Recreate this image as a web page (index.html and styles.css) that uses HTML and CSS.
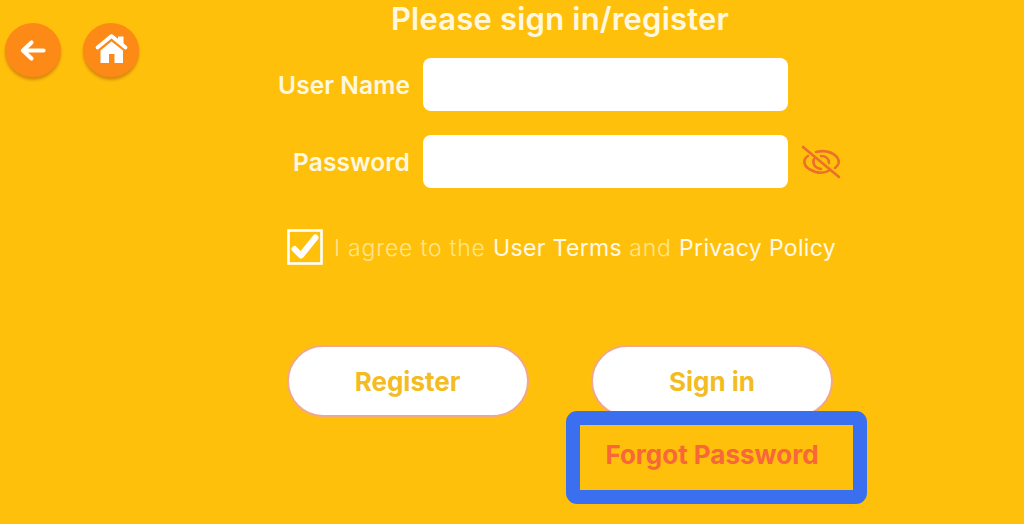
FILE: index.html
```html
<!DOCTYPE html>
<html lang="en">
<head>
<meta charset="utf-8">
<title>Sign in</title>
<link rel="stylesheet" href="styles.css">
</head>
<body>
<div class="page">
  <nav class="nav">
    <button class="round" aria-label="Back">
      <svg width="30" height="30" viewBox="0 0 30 30"><path d="M25.500 15.500H6M13.500 7.500 5 15.500l8.500 8" fill="none" stroke="#fff" stroke-width="4.200" stroke-linecap="round" stroke-linejoin="round"/></svg>
    </button>
    <button class="round" aria-label="Home">
      <svg width="34" height="34" viewBox="0 0 34 34"><path d="M17.500 8.500 6.500 17.500V30H15v-9h5.500v9H29V17.500z" fill="#fff"/><path d="M3.500 14.500 17.500 3l14 11.500" fill="none" stroke="#fff" stroke-width="3.600" stroke-linecap="round" stroke-linejoin="round"/><path d="M24 3.500h5.500V12L24 7.500z" fill="#fff"/></svg>
    </button>
  </nav>
  <main class="form">
    <h1 class="title">Please sign in/register</h1>
    <div class="field">
      <label class="label">User Name</label>
      <div class="input"></div>
    </div>
    <div class="field field-second">
      <label class="label">Password</label>
      <div class="input"></div>
      <svg class="eye" width="42" height="36" viewBox="0 0 42 36"><g fill="none" stroke="#EC6F2A" stroke-width="2.600" stroke-linecap="round"><path d="M3 3 39 33"/><path d="M8 12C3 15 3 21 9 25c7 4 15 5 21 1"/><path d="M16 8c8-2 16 0 21 5 3 4 2 8-2 11"/><path d="M14 15c-2 5 1 9 7 10"/><path d="M21 12c5 0 8 3 8 7"/></g></svg>
    </div>
    <div class="agree">
      <svg class="check" width="36" height="36" viewBox="0 0 36 36"><rect x="1.500" y="1.500" width="33" height="33" fill="none" stroke="#fff" stroke-width="2.600"/><path d="M7.500 20 14 26.500 28.500 8.500" fill="none" stroke="#fff" stroke-width="6" stroke-linecap="round" stroke-linejoin="round"/></svg>
      <p class="agree-text">I agree to the <span class="link">User Terms</span> and <span class="link">Privacy Policy</span></p>
    </div>
    <div class="actions">
      <button class="pill">Register</button>
      <button class="pill">Sign in</button>
    </div>
    <div class="forgot-row">
      <a class="forgot">Forgot Password</a>
    </div>
  </main>
  <div class="highlight"></div>
</div>
</body>
</html>
```

FILE: styles.css
```css
* { box-sizing: border-box; }
html, body { margin: 0; padding: 0; }
body { width: 1024px; height: 524px; overflow: hidden; }
.page {
  position: relative;
  display: flex;
  width: 1024px;
  height: 524px;
  background: #FFC00B;
  font-family: Inter, "Noto Sans", sans-serif;
}
.nav {
  display: flex;
  gap: 22px;
  width: 277px;
  padding: 23px 0 0 5px;
  align-items: flex-start;
}
.round {
  display: flex;
  align-items: center;
  justify-content: center;
  width: 56px;
  height: 54px;
  padding: 0;
  border: 0;
  border-radius: 50%;
  background: #FD8A17;
  box-shadow: 0 3px 3px #D98A0C;
}
.form {
  display: flex;
  flex-direction: column;
  width: 566px;
}
.title {
  margin: 0;
  height: 58px;
  font-size: 31px;
  line-height: 38px;
  font-weight: 600;
  letter-spacing: 0.200px;
  color: #FFF8E0;
  text-align: center;
  white-space: nowrap;
}
.field {
  display: grid;
  grid-template-columns: 133px 365px 42px;
  column-gap: 13px;
  align-items: center;
  height: 53px;
}
.field-second { margin-top: 24px; }
.label {
  font-size: 24.500px;
  font-weight: 600;
  letter-spacing: 0.100px;
  color: #FFF8E0;
  text-align: right;
  white-space: nowrap;
}
.input {
  height: 53px;
  background: #fff;
  border-radius: 8px;
}
.eye { margin-left: -1px; }
.agree {
  display: flex;
  align-items: center;
  gap: 11px;
  margin: 41px 0 0 10px;
  height: 36px;
}
.check { flex: none; }
.agree-text {
  margin: 2px 0 0;
  font-size: 23px;
  font-weight: 300;
  letter-spacing: 0.800px;
  color: #FFE48C;
  white-space: nowrap;
}
.link { color: #FFF8E8; font-weight: 400; letter-spacing: 0.350px; }
.actions {
  display: flex;
  gap: 62.500px;
  margin: 80px 0 0 9.500px;
}
.pill {
  width: 242px;
  height: 72px;
  padding: 0;
  border: 2px solid #F0A78C;
  border-radius: 36px;
  background: #fff;
  font-family: Inter, sans-serif;
  font-size: 26px;
  font-weight: 700;
  color: #F2BC22;
}
.forgot-row {
  display: flex;
  justify-content: flex-end;
  width: 556px;
  margin-top: 21px;
}
.forgot {
  width: 242px;
  text-align: center;
  font-family: Inter, sans-serif;
  font-size: 26px;
  line-height: 34px;
  font-weight: 700;
  color: #F7673A;
  white-space: nowrap;
}
.highlight {
  position: absolute;
  left: 566px;
  top: 411px;
  width: 301px;
  height: 93px;
  border: 14.500px solid #3A70F0;
  border-radius: 11px;
  background: transparent;
}
```
